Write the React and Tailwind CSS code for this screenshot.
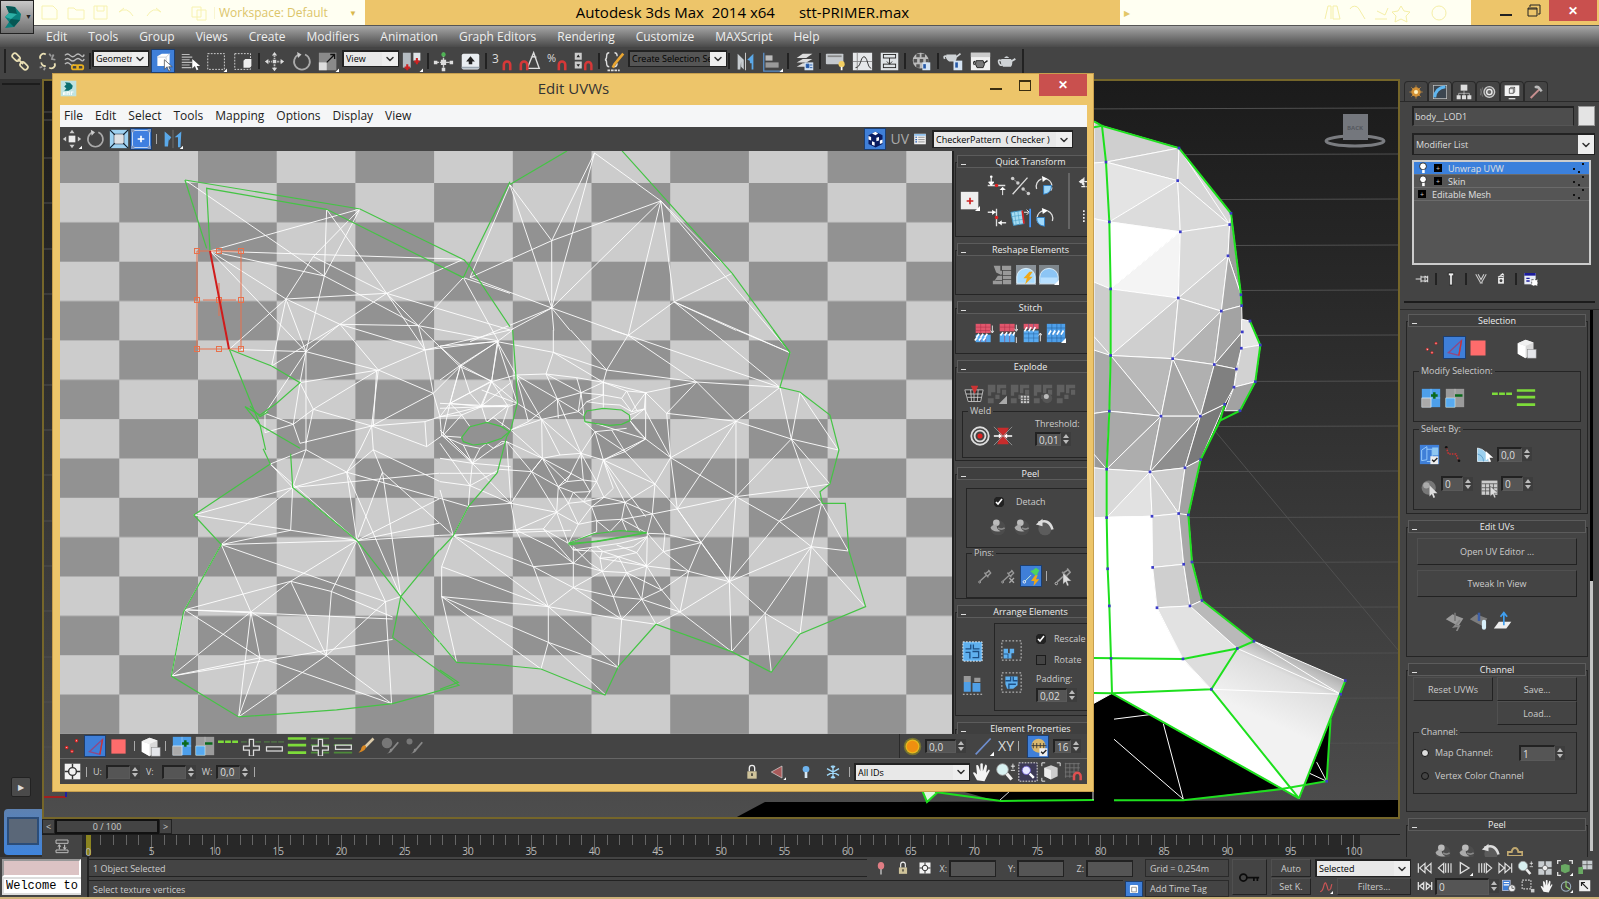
import React from "react";
import { ChevronDown } from "lucide-react";

const ICONS = {
  logo: <><path d="M5 1l9 1 6 7-1 6-6 7-9 1 4-6-4-5 4-4z" fill="#0b7f7c" /><path d="M5 1l9 1 2 7-8-1zM13 22l6-7-9-1-2 3z" fill="#075754" /><path d="M8 8l8 1-6 5-6-2z" fill="#2cb0a6" /></>,
  max: <><rect x="1" y="1" width="22" height="22" fill="#bfe3e2" /><path d="M7 3l7 1 4 4-1 4-5 3-6 0 3-3-3-3 3-3z" fill="#0a6f70" /><path d="M5 21v-3h2v3M10 21v-4h3v4M16 21v-4h3" stroke="#fff" strokeWidth="1.5" fill="none" /></>,
  link: <g fill="none" stroke="#e9dfb4" strokeWidth="2"><rect x="2" y="4" width="10" height="6" rx="3" transform="rotate(45 7 7)" /><rect x="11" y="14" width="10" height="6" rx="3" transform="rotate(45 16 17)" /><path d="M9 9l6 6" /></g>,
  unlink: <g fill="none" strokeWidth="2"><path d="M10 4a4 4 0 0 0-6 5M5 13a4 4 0 0 0 5 4M14 19a4 4 0 0 0 6-5" stroke="#e9dfb4" /><path d="M14 3l2 3M19 4l-2 4M21 10l-5-1M3 19l3-1M8 22l1-3" stroke="#999" /></g>,
  bind: <><path d="M1 5q3-3 6 0t6 0 6 0 4-1M1 10q3-3 6 0t6 0 6 0 4-1M1 15q3-3 6 0t4 0" stroke="#bbb" strokeWidth="1.6" fill="none" /><rect x="9" y="16" width="7" height="5" rx="2" fill="none" stroke="#e8b020" strokeWidth="2" /><rect x="15" y="16" width="7" height="5" rx="2" fill="none" stroke="#e8b020" strokeWidth="2" /></>,
  selobj: <><path d="M5 6l5-3h9v11l-4 3H5z" fill="#fff" /><path d="M15 7v10M5 7h10l4-4" stroke="#c3c9d1" fill="none" /><path d="M13 10v11l3-3 2 5 2-1-2-4h4z" fill="#fff" stroke="#444" strokeWidth=".8" /></>,
  list: <><path d="M2 4h9M2 7h12M2 10h9M2 13h12M2 16h9M2 19h11" stroke="#bbb" strokeWidth="1.4" /><path d="M14 9v11l3-3 2 5 2-1-2-4h4z" fill="#fff" /></>,
  rect: <><rect x="2" y="3" width="19" height="18" fill="none" stroke="#e0e0e0" strokeDasharray="2 1.5" /><path d="M20 24h4v-4z" fill="#fff" /></>,
  rectwin: <><rect x="2" y="3" width="18" height="18" fill="none" stroke="#e0e0e0" strokeDasharray="2 1.5" /><path d="M12 11l2-2h7v8l-2 2h-7z" fill="#eee" /></>,
  move: <><path d="M12 1l3 4h-6zM12 23l3-4h-6zM1 12l4-3v6zM23 12l-4-3v6z" fill="#ddd" /><path d="M12 5v4M12 15v4M5 12h4M15 12h4" stroke="#bbb" strokeWidth="2" strokeDasharray="2 1" /><rect x="10" y="10" width="4" height="4" fill="#ddd" /></>,
  moveBig: <><path d="M12 1l3 4h-6zM12 23l3-4h-6zM1 12l4-3v6zM23 12l-4-3v6z" fill="#ccc" /><rect x="8" y="8" width="8" height="8" fill="#eee" /><path d="M20 24h4v-4z" fill="#fff" /></>,
  rotate: <><path d="M16 4a9 9 0 1 1-7 0" fill="none" stroke="#aaa" strokeWidth="2" /><path d="M7 1l5 3-4 4z" fill="#ccc" /></>,
  scale: <><rect x="1" y="2" width="20" height="20" fill="#8a8a8a" /><rect x="1" y="13" width="9" height="9" fill="#ddd" /><path d="M10 13l9-9M14 4h5v5" stroke="#111" fill="none" strokeWidth="1.5" /><path d="M20 24h4v-4z" fill="#fff" /></>,
  pivot: <><rect x="1" y="2" width="9" height="17" fill="#b5bcc2" /><rect x="13" y="2" width="8" height="9" fill="#dfe4e8" /><path d="M6 15v7M3 19h6M17 8v7M14 12h6" stroke="#c22" strokeWidth="2.4" /><path d="M20 24h4v-4z" fill="#fff" /></>,
  manip: <><path d="M12 2v20M2 13h20" stroke="#ccc" strokeWidth="1.6" strokeDasharray="5 1" /><circle cx="12" cy="4" r="2.5" fill="#4fb455" /><path d="M9 10h6v6H9zM1 11h4v4H1zM19 11h4v4h-4zM10 19h4v4h-4z" fill="#ddd" /></>,
  keyb: <><rect x="2" y="3" width="20" height="18" rx="2" fill="#e9edf1" /><path d="M12 6l5 6h-3v3h-4v-3H7z" fill="#222" /><path d="M2 18h20v2H2z" fill="#9ba6b0" /></>,
  mag: <path d="M14 22v-6a3.500 3.500 0 0 1 7 0v6" fill="none" stroke="#d63838" strokeWidth="2.800" />,
  spinsnap: <><rect x="2" y="2" width="8" height="8" fill="#ccc" /><rect x="2" y="12" width="8" height="8" fill="#ccc" /><path d="M4 7l2-3 2 3zM4 15l2 3 2-3z" fill="#222" /></>,
  anglesnap: <path d="M9 20L16 3l6 17M9 20h14M13 8a8 8 0 0 1 6 0" stroke="#ddd" fill="none" strokeWidth="1.500" />,
  named: <><path d="M6 2q-3 0-3 4t-2 4q2 0 2 4t3 4M12 2q3 0 3 4M11 18q4 0 4-4" stroke="#ddd" fill="none" strokeWidth="1.600" /><path d="M22 3L12 15l-2 4" stroke="#e9a632" strokeWidth="3" /><path d="M4 22h14" stroke="#ddd" strokeWidth="2" strokeDasharray="3 1" /></>,
  mirror: <><path d="M3 3l7 7v11l-3-3V12l-1 9H3z" fill="#c7ccd0" /><path d="M21 3l-7 7 3 1v3h2v7h2z" fill="#5aa8e8" /><path d="M12 2v20" stroke="#ddd" /></>,
  uvmirror: <><path d="M2 3l8 7-3 4v-3l-1 10H2z" fill="#5aa8e8" /><path d="M22 3l-8 7 4 0v12h3z" fill="#5aa8e8" /><path d="M12 1v22" stroke="#777" /><path d="M20 24h4v-4z" fill="#fff" /></>,
  align: <><path d="M2 2v21h20" stroke="#5a8fc8" fill="none" strokeWidth="1.500" /><rect x="4" y="5" width="8" height="6" fill="#bbb" /><rect x="4" y="13" width="15" height="6" fill="#999" /><path d="M20 24h4v-4z" fill="#fff" /></>,
  layers: <><path d="M3 8l7-5h11l-7 5zM3 13l7-4h11l-7 4zM3 18l7-4h9l-6 4z" fill="#ddd" /><rect x="12" y="13" width="10" height="9" fill="#cfe0f2" /><path d="M14 15h3v4h-3zM18 16h3M18 19h3" fill="#2458a8" stroke="#2458a8" /></>,
  ribbon: <><rect x="1" y="3" width="20" height="12" rx="1" fill="#c5c9cd" /><path d="M3 6h16" stroke="#888" strokeWidth="2" /><circle cx="19" cy="15" r="3.500" fill="#f3cf62" /><path d="M19 18v4" stroke="#fff" strokeWidth="2" /></>,
  curve: <><rect x="1" y="2" width="22" height="20" fill="#e6e8ea" /><path d="M6 2v20M1 12h22" stroke="#888" /><path d="M4 19q4 0 6-7t5-5q2 2 3 7t4 6" stroke="#222" fill="none" /></>,
  schem: <><rect x="2" y="2" width="20" height="20" fill="#dfe3e6" /><rect x="5" y="4" width="14" height="4" fill="none" stroke="#222" /><rect x="5" y="15" width="14" height="4" fill="none" stroke="#222" /><path d="M12 8v7M9 12l3 3 3-3" stroke="#222" fill="none" /></>,
  material: <><circle cx="11" cy="11" r="9" fill="#bbb" /><path d="M6 3h4v4H6zM12 3h4v4h-4zM3 9h4v4H3zM10 9h4v4h-4zM17 9h3v4h-3zM6 15h4v4H6z" fill="#555" /><rect x="13" y="13" width="9" height="9" fill="#d4e3f3" /><path d="M14 15h3v5h-3z" fill="#2458a8" /></>,
  teapot: <><path d="M5 9h11q3 4 0 9H7Q3 14 5 9zM8 8q3-4 6 0z" fill="#cfd3d6" /><path d="M16 12l5-3M5 11q-4-2-3 2t4 3" stroke="#cfd3d6" fill="none" strokeWidth="2" /></>,
  teaframe: <><rect x="1" y="2" width="22" height="20" fill="#f0f0f0" /><rect x="1" y="2" width="22" height="5" fill="#ccc" /><path d="M7 11h8q3 4 0 8H8q-3-4-1-8z" fill="#777" stroke="#222" /><path d="M16 14l4-3M6 12q-3 0-1 4" stroke="#222" fill="none" strokeWidth="1.500" /></>,
  teaset: <><path d="M4 4h11q2 4-1 8H7Q2 9 4 4z" fill="#cfd3d6" /><path d="M15 7l5-4M4 6q-4-1-2 3" stroke="#cfd3d6" fill="none" strokeWidth="2" /><rect x="12" y="11" width="10" height="11" fill="#d4e3f3" /><path d="M14 13h3v6h-3z" fill="#2458a8" /></>,
  dots: <g fill="#fff" stroke="#d22" strokeWidth="1.500"><circle cx="18" cy="5" r="1.500" /><circle cx="5" cy="14" r="1.500" /><circle cx="12" cy="19" r="1.500" /></g>,
  edge: <><path d="M20 4L5 18l12 3z" fill="none" stroke="#8e4a86" strokeWidth="1.500" /><path d="M20 4L17 21" stroke="#c33" strokeWidth="1.500" /></>,
  poly: <rect x="3" y="3" width="18" height="18" fill="#ff6c6c" />,
  cube: <><path d="M2 6l9-4 9 3v12l-9 6-9-5z" fill="#d9d9d9" /><path d="M2 6l9 3v14l-9-5z" fill="#fff" /><path d="M2 6l9-4 9 3-9 4z" fill="#f1f1f1" /><rect x="13" y="13" width="10" height="10" fill="#e4e6ea" stroke="#888" strokeWidth=".600" /></>,
  box: <><path d="M4 7l8-3 8 3v10l-8 4-8-4z" fill="#ccc" /><path d="M4 7l8 3v11l-8-4z" fill="#eee" /><path d="M1 5V1h4M19 1h4v4M1 19v4h4" fill="none" stroke="#fff" /></>,
  grow: <><rect x="1" y="1" width="22" height="22" fill="#4d9fea" /><rect x="1" y="12" width="11" height="11" fill="#aaa" stroke="#eee" strokeWidth=".600" /><path d="M12 1v22M1 12h22" stroke="#bfe0ff" strokeWidth=".600" /><path d="M16 5v8M12 9h8" stroke="#0b6a1c" strokeWidth="3" /></>,
  shrink: <><rect x="1" y="1" width="22" height="22" fill="#9b9b9b" /><rect x="1" y="12" width="11" height="11" fill="#58aaf0" stroke="#dff" strokeWidth=".600" /><path d="M12 1v11" stroke="#bbb" /><path d="M12 9h9" stroke="#0b6a1c" strokeWidth="3" /></>,
  loop: <path d="M0 7h7M8.500 7h7M17 7h7" stroke="#7ddc3a" strokeWidth="3" />,
  ring: <path d="M1 3h22M1 11h22M1 20h22" stroke="#7ddc3a" strokeWidth="3.200" />,
  loopplus: <><path d="M0 7h7M8.500 7h7M17 7h7" stroke="#4d6b45" strokeWidth="2" /><path d="M10 4h5v8h7v5h-7v7h-5v-7H3v-5h7z" fill="#444" stroke="#ddd" strokeWidth="1.500" /></>,
  loopminus: <><path d="M0 7h7M8.500 7h7M17 7h7" stroke="#4d6b45" strokeWidth="2" /><rect x="3" y="13" width="19" height="5" fill="#444" stroke="#ddd" strokeWidth="1.500" /></>,
  ringplus: <><path d="M1 3h22M1 11h22M1 20h22" stroke="#4d8a3a" strokeWidth="2" /><path d="M10 4h5v8h7v5h-7v7h-5v-7H3v-5h7z" fill="#444" stroke="#ddd" strokeWidth="1.500" /></>,
  ringminus: <><path d="M1 3h22M1 11h22M1 20h22" stroke="#4d8a3a" strokeWidth="2" /><rect x="3" y="11" width="19" height="5" fill="#444" stroke="#ddd" strokeWidth="1.500" /></>,
  brush: <><path d="M22 2L11 13" stroke="#d9c9a8" strokeWidth="3.500" /><path d="M12 12q1 6-10 9 4-3 4-7 3-5 6-2z" fill="#d98822" /></>,
  graybrush: <><circle cx="8" cy="8" r="7" fill="#777" /><path d="M23 7L12 20" stroke="#888" strokeWidth="2.500" /><path d="M16 15q-1 6-8 7 4-2 4-6z" fill="#888" /></>,
  graybrush2: <><circle cx="6" cy="6" r="4" fill="#777" /><path d="M23 7L12 20" stroke="#888" strokeWidth="2.500" /><path d="M16 15q-1 6-8 7 4-2 4-6z" fill="#888" /></>,
  scaleuv: <><rect x="1" y="1" width="22" height="22" fill="#9fd2f2" /><rect x="6" y="6" width="12" height="12" fill="#dde0e4" stroke="#223" strokeWidth=".600" /><path d="M1 1l6 6M23 1l-6 6M1 23l6-6M23 23l-6-6" stroke="#123" strokeWidth="1.500" /></>,
  freeform: <><rect x="2" y="2" width="20" height="20" fill="#3f7fe0" stroke="#fff" strokeWidth=".800" /><path d="M12 8v8M8 12h8" stroke="#fff" strokeWidth="2" /><path d="M0 0h4v4H0zM20 0h4v4h-4zM0 20h4v4H0zM20 20h4v4h-4z" fill="#7d96c0" /></>,
  checker: <><path d="M12 3l8 4v10l-8 4-8-4V7z" fill="#0a1c60" /><path d="M8 5l4-2 3 2-3 2zM4 8l3 1v4l-3-1zM13 10l3-1v4l-3 1zM8 14l3 1v4l-3-1zM17 13l3-1v4l-3 1z" fill="#fff" /></>,
  options: <><rect x="2" y="3" width="20" height="18" fill="#f2f2f2" /><path d="M4 9h3M4 13h3M4 17h3" stroke="#2a5fb0" strokeWidth="2" /><path d="M9 9h11M9 13h11M9 17h11" stroke="#888" strokeWidth="1.500" /><path d="M2 5h20" stroke="#8fc1ee" strokeWidth="3" /></>,
  plus: <><rect x="1" y="1" width="21" height="21" fill="#eee" /><path d="M12 8v8M8 12h8" stroke="#c22" strokeWidth="2" /><path d="M18 24h6v-6z" fill="#fff" /></>,
  alignh: <><path d="M2 12h20M6 3v9" stroke="#ddd" fill="none" strokeWidth="1.500" /><path d="M6 12l-3-4h6zM19 23v-8M16 17l3-3 3 3" fill="#fff" stroke="#fff" /><circle cx="12" cy="12" r="2" fill="#d22" /><circle cx="6" cy="2" r="1.500" fill="#fff" /></>,
  alignv: <><path d="M12 2v20M2 6h9M14 18h9" stroke="#ddd" fill="none" strokeWidth="1.500" /><path d="M11 6L7 3v6zM14 18l4-3v6z" fill="#fff" /><circle cx="12" cy="12" r="2" fill="#d22" /></>,
  linear: <><path d="M3 22L20 3" stroke="#ddd" strokeWidth="1.500" /><path d="M3 4l6 5M15 16l6 5" stroke="#999" /><circle cx="3" cy="4" r="2" fill="#ccc" /><circle cx="9" cy="9" r="2" fill="#ccc" /><circle cx="15" cy="16" r="2" fill="#ccc" /><circle cx="21" cy="21" r="2" fill="#ccc" /></>,
  rotcw: <><path d="M3 16a9 9 0 1 1 16 2" fill="none" stroke="#ddd" strokeWidth="1.500" strokeDasharray="14 2" /><path d="M9 1l6 3-5 4z" fill="#fff" /><path d="M11 12h9q0 9-9 10z" fill="#9fd8fa" stroke="#2a7fc8" /></>,
  rotccw: <><path d="M21 16A9 9 0 1 0 5 18" fill="none" stroke="#ddd" strokeWidth="1.500" strokeDasharray="14 2" /><path d="M9 1l7 3-6 4z" fill="#fff" /><path d="M12 12H3q0 9 9 10z" fill="#9fd8fa" stroke="#2a7fc8" /></>,
  alignedge: <><path d="M1 6l13-2 2 15-12 2z" fill="#a6dcf2" stroke="#3a8fc0" /><path d="M5 5l2 15M9 5l2 15M2 11l13-2M3 16l12-2" stroke="#4a9fc8" strokeWidth=".700" /><path d="M14 4l2 15" stroke="#d22" strokeWidth="2" /><path d="M16 6h5M19 3l3 3-3 3" stroke="#fff" fill="none" /><path d="M23 2v21" stroke="#49f" strokeWidth="2" /></>,
  straighten: <path d="M2 1h8v6h1v5l-6-3zM12 1h11v5H12zM8 7h4v5M13 7h10v5H13zM3 19l4-6h5v5H5zM13 13h10v4H13zM1 19h11v4H1zM13 18h10v5H13z" fill="#999" />,
  relaxbolt: <><rect width="24" height="24" fill="#8a9299" /><path d="M1 22V14q1-9 11-10 10 1 11 10v8z" fill="#a9dcff" stroke="#e8f6ff" /><path d="M16 8l-7 8h4l-2 7 9-9h-4l4-6z" fill="#f0a818" /></>,
  relax: <><rect width="24" height="24" fill="#7e868c" /><path d="M1 22V14q1-9 11-10 10 1 11 10v8z" fill="#8cc5f5" stroke="#e8f6ff" /><path d="M2 15h20v7H2z" fill="#b8e0ff" /><path d="M18 24h6v-6z" fill="#fff" /></>,
  stitchA: <><rect x="2" y="1" width="18" height="11" fill="#e0566c" /><rect x="2" y="14" width="18" height="9" fill="#58aaf0" /><path d="M2 5h18M2 9h18M8 1v22M14 1v22" stroke="#aa2f48" strokeWidth=".600" /><path d="M3 17l3-4M8 17l3-4M13 17l3-4M1 21l3-4M6 21l3-4M11 21l3-4" stroke="#fff" strokeWidth="2" /><path d="M22 3v8M20 9l2 3 2-3" stroke="#fff" fill="none" /></>,
  stitchB: <><rect x="2" y="1" width="18" height="9" fill="#e0566c" /><rect x="2" y="13" width="18" height="10" fill="#58aaf0" /><path d="M2 5h18M8 1v22M14 1v22" stroke="#aa2f48" strokeWidth=".600" /><path d="M3 15l3-4M8 15l3-4M13 15l3-4M18 15l2-4" stroke="#fff" strokeWidth="2" /><path d="M22 2v7M22 24v-7M20 7l2 3 2-3" stroke="#fff" fill="none" /></>,
  stitchC: <><rect x="2" y="1" width="18" height="6" fill="#e0566c" /><rect x="2" y="9" width="18" height="14" fill="#58aaf0" /><path d="M2 13h18M2 18h18M8 1v22M14 1v22" stroke="#27609c" strokeWidth=".600" /><path d="M3 10l3-5M8 10l3-5M13 10l3-5" stroke="#fff" strokeWidth="2" /><path d="M22 22v-9M20 15l2-3 2 3" stroke="#fff" fill="none" /></>,
  stitchD: <><rect x="1" y="1" width="22" height="22" fill="#4d9fea" /><path d="M1 6h22M1 18h22M7 1v22M13 1v22M18 1v22" stroke="#27609c" strokeWidth=".700" /><path d="M3 14l3-5M8 14l3-5M13 14l3-5M18 14l3-5" stroke="#fff" strokeWidth="2" /><path d="M18 24h6v-6z" fill="#fff" /></>,
  basket: <><path d="M1 7h22l-3 14H5z" fill="#333" stroke="#ccc" /><path d="M2 12h20M4 16h17M8 7l1 14M12 7v14M17 7l-1 14" stroke="#ccc" /><path d="M8 2h9l-4 10z" fill="#c33" /></>,
  flatten: <><path d="M1 1h9v9H5v4H1zM12 1h11v4h-7v6h-4zM1 17h7v6H1zM10 13h5v5h-5zM18 7h5v6h-5z" fill="#606060" /></>,
  tri: <path d="M14 24h10V14z" fill="#aaa" />,
  minigrid: <><rect x="13" y="14" width="10" height="9" fill="#ccc" /><path d="M13 17h10M13 20h10M16 14v9M20 14v9" stroke="#444" /></>,
  miniball: <><circle cx="17" cy="17" r="6" fill="#555" /><circle cx="16" cy="15" r="3" fill="#bbb" /></>,
  target: <g fill="none" stroke="#ddd" strokeWidth="2.200"><circle cx="12" cy="12" r="10.500" /><circle cx="12" cy="12" r="6.500" /><circle cx="12" cy="12" r="2" fill="#d22" stroke="#d22" /></g>,
  weld: <><path d="M5 2h14l-3 7v6l3 7H5l3-7V9z" fill="#c82c2c" /><path d="M1 1l22 22M23 1L1 23" stroke="#999" /><path d="M1 12h8M23 12h-8" stroke="#fff" strokeWidth="2" /><path d="M7 9l4 3-4 3zM17 9l-4 3 4 3z" fill="#fff" /></>,
  ball: <><circle cx="12" cy="13" r="9" fill="#4c4c4c" /><circle cx="10" cy="7" r="4" fill="#bbb" /><path d="M3 13q3 6 12 4-6-3-4-8-6 0-8 4z" fill="#aaa" /><path d="M12 13q4 3 8 0" stroke="#888" fill="none" strokeWidth="2" /></>,
  reset: <><circle cx="12" cy="14" r="8" fill="#5c5c5c" /><path d="M4 7q13-6 17 8" stroke="#ddd" strokeWidth="3" fill="none" /><path d="M1 9l8-7v9z" fill="#ddd" /></>,
  pin: <><circle cx="4" cy="21" r="1.500" fill="none" stroke="#ccc" /><path d="M5 19L14 11M11 7l6 7M13 8l6-4M16 12l5-5M17 3l4 5" stroke="#999" strokeWidth="2" /></>,
  cross: <path d="M14 15l7 7M21 15l-7 7" stroke="#aaa" strokeWidth="2" />,
  pinbolt: <><circle cx="4" cy="19" r="1.500" fill="none" stroke="#fff" /><path d="M5 18l7-7" stroke="#dfd" /><path d="M11 6l8 7 1-4 2-4-4-3-4 3z" fill="#4cd35f" /><path d="M17 11l-5 7h4l-1 6 7-8h-4l2-5z" fill="#f0a818" /></>,
  cursor: <path d="M12 8v14l3-3 2 5 2-1-2-5h5z" fill="#ddd" stroke="#555" strokeWidth=".500" />,
  quickrest: <path d="M2 8h16M2 8l5-4v8zM4 14h12" stroke="#eee" fill="#eee" strokeWidth="1.500" strokeDasharray="5 1" />,
  quickrest2: <path d="M12 2v20M7 4v16" stroke="#eee" strokeWidth="2" strokeDasharray="2 2" />,
  packA: <><rect x="1" y="1" width="22" height="22" fill="#5fb0ee" stroke="#fff" strokeDasharray="2 1.500" /><path d="M4 9h6V4M13 4v5h7M4 13h5v7M12 12h7v7h-7" stroke="#1d4f84" fill="none" strokeWidth="1.500" /></>,
  packB: <><rect x="1" y="1" width="22" height="22" fill="none" stroke="#ddd" strokeDasharray="2 2" /><path d="M3 10h5v5h2v-5h5v5h-3v6H3z" fill="#5fb0ee" /><path d="M3 16h5v5M12 17h3" stroke="#1d4f84" fill="none" /></>,
  packC: <><rect x="1" y="1" width="22" height="22" fill="none" stroke="#ddd" strokeDasharray="2 2" /><path d="M5 5h14v10l-5 4H7l-2-5z" fill="#5fb0ee" /><path d="M5 10h6V5M14 5v5h5M9 19v-5h8" stroke="#1d4f84" fill="none" strokeWidth="1.500" /></>,
  packD: <><path d="M2 1h8v7H2zM14 3h7v5h-7z" fill="#999" /><path d="M2 8h8v11H2zM12 9h9v10h-9z" fill="#4f9fe6" /><path d="M1 22h22" stroke="#ddd" strokeDasharray="2 2" /></>,
  sun: <><circle cx="12" cy="12" r="10" fill="#a8a31c" opacity=".500" /><circle cx="12" cy="12" r="8" fill="#e8b81c" /><circle cx="12" cy="12" r="6.500" fill="#ef8f10" /></>,
  diag: <><path d="M2 22L20 3" stroke="#6f8fd0" strokeWidth="2" /><path d="M19 24h5v-5z" fill="#fff" /></>,
  falloff: <><circle cx="12" cy="11" r="8" fill="#d9b76c" /><path d="M4 11h17M6 8v6M10 8v6M14 8v6M18 8v6" stroke="#333" /><rect x="13" y="14" width="9" height="9" fill="#eee" /><path d="M15 18l2 2 4-4" stroke="#222" fill="none" strokeWidth="1.500" /></>,
  hand: <path d="M6 22l-5-9q2-2 4 1l1 1L5 4q2-1 3 1l2 6 0-9q2-1 3 0l0 9 3-8q2 0 2 2l-1 8 3-4q2 0 1 2l-4 8-2 4z" fill="#f4f4f4" />,
  zoom: <><circle cx="9" cy="9" r="7" fill="#d8f1f1" stroke="#999" /><path d="M14 14l6 7" stroke="#eee" strokeWidth="4" /><path d="M19 5h5M21.500 2v6M19 10h5" stroke="#fff" /></>,
  zoomreg: <><rect x="1" y="1" width="22" height="22" fill="#3d3a55" stroke="#fff" strokeDasharray="2 1.500" /><circle cx="10" cy="10" r="5" fill="#e6e6ff" stroke="#6a5ad0" /><path d="M14 14l5 5" stroke="#fff" strokeWidth="3" /></>,
  gridsnap: <><path d="M1 2h18M1 7h18M1 12h14M1 17h10M2 1v18M7 1v18M12 1v14M17 1v10" stroke="#777" /><path d="M12 22v-5a4 4 0 0 1 8 0v5" fill="none" stroke="#e05050" strokeWidth="3" /></>,
  lock: <><rect x="5" y="11" width="14" height="11" fill="#cfc39a" /><path d="M8 11V6a4 4 0 0 1 8 0v5" stroke="#eee" strokeWidth="2" fill="none" /><path d="M12 14v4" stroke="#222" strokeWidth="2" /></>,
  arrowred: <><path d="M2 12L18 3v18z" fill="#a85a5a" stroke="#ddd" /><path d="M20 24h4v-4z" fill="#fff" /></>,
  bulb: <><circle cx="12" cy="8" r="5" fill="#6fb4ee" /><path d="M12 12v9" stroke="#d8e8f4" strokeWidth="4" /></>,
  snow: <path d="M12 2v20M3 7l18 10M21 7L3 17M9 3l3 3 3-3M9 21l3-3 3 3" stroke="#9fd8fa" strokeWidth="2" fill="none" />,
  absolute: <><rect x="1" y="1" width="22" height="22" fill="#f2f2f2" /><circle cx="12" cy="12" r="5.500" fill="none" stroke="#333" strokeWidth="2" /><path d="M12 1v5M12 18v5M1 12h5M18 12h5" stroke="#333" strokeWidth="2" /></>,
  create: <><circle cx="12" cy="12" r="7" fill="#f0a030" opacity=".800" /><path d="M12 2v20M2 12h20M5 5l14 14M19 5L5 19" stroke="#e9a040" /><circle cx="12" cy="12" r="3" fill="#fff3c0" /></>,
  modify: <><rect x="2" y="2" width="20" height="20" fill="#3c4650" stroke="#ccc" /><path d="M4 20Q5 6 20 4" stroke="#5fb6f0" strokeWidth="4.500" fill="none" /></>,
  hier: <><rect x="7" y="1" width="10" height="9" fill="#ddd" /><path d="M12 10v5M4 18v-4h16v4M12 14v4" stroke="#ccc" fill="none" /><path d="M1 17h6v6H1zM9 17h6v6H9zM17 17h6v6h-6z" fill="#ddd" /></>,
  motion: <><circle cx="14" cy="12" r="8" fill="#666" stroke="#ccc" strokeWidth="2" /><circle cx="14" cy="12" r="4" fill="none" stroke="#eee" strokeWidth="2" /><path d="M4 5q-4 7 0 14M1 7q-2 5 0 10" stroke="#888" fill="none" /></>,
  display: <><rect x="1" y="2" width="22" height="16" fill="#f4f4f4" /><path d="M7 22h10" stroke="#ddd" strokeWidth="2" /><path d="M8 7l2-2h6v7l-2 2H8zM14 7v7M8 7h6l2-2" stroke="#333" fill="none" /></>,
  hammer: <><path d="M4 21L17 8" stroke="#c78f8f" strokeWidth="3" /><path d="M10 3q6-2 9 3l3 4-3 2-4-5-5-1z" fill="#bbb" /></>,
  pinstack: <path d="M1 12h8M9 7v10M9 9h6v6H9M15 7v10M19 7v10M15 8l4 2v4l-4 2" stroke="#ddd" strokeWidth="1.600" fill="none" />,
  showend: <path d="M8 3h8v4h-2v14h-4V7H8z" fill="#eee" stroke="#111" />,
  unique: <path d="M3 4l8 14M21 4l-8 14M7 4l5 9 5-9M10 19h5" stroke="#ccc" strokeWidth="1.800" fill="none" />,
  trash: <><path d="M7 10h10v10H7z" fill="#eee" /><path d="M7 9q5-4 10 0M11 6l4-3 2 3" stroke="#eee" fill="none" strokeWidth="2" /><circle cx="12" cy="15" r="2.500" fill="#444" /></>,
  config: <><rect x="2" y="3" width="17" height="17" fill="#e9ecf6" /><path d="M2 3h17v4H2z" fill="#1c1c9c" /><path d="M5 11h5M5 15h5" stroke="#1c1c9c" strokeWidth="2" /><path d="M13 13h9v9h-9z" fill="#fff" stroke="#333" strokeDasharray="3 2" /></>,
  seledge: <><rect x="1" y="1" width="22" height="22" fill="#3f7fd8" /><path d="M3 7l6-4v15l-6 1zM9 6h6v14H9" stroke="#9cd0ff" fill="none" /><rect x="15" y="4" width="7" height="9" fill="#8fc7f2" /><rect x="13" y="14" width="9" height="9" fill="#eee" /><path d="M15 18l2 2 4-4" stroke="#222" fill="none" strokeWidth="1.500" /></>,
  p2p: <><path d="M3 3l3 9h10l4 10" stroke="#c33" fill="none" strokeDasharray="2 1.500" strokeWidth="2" /><circle cx="3" cy="3" r="1.800" fill="#111" /><circle cx="20" cy="21" r="1.800" fill="#111" /></>,
  planar: <><path d="M2 22V4q14 2 15 18z" fill="#9cd0ee" stroke="#e8f6ff" /><path d="M2 12q8 2 8 10" stroke="#4f94c4" fill="none" /><path d="M13 8v13l3-3 2 5 2-1-2-5h5z" fill="#fff" /></>,
  smooth: <><circle cx="11" cy="11" r="9" fill="#777" /><circle cx="8" cy="8" r="4" fill="#aaa" /><path d="M12 8v14l3-3 2 5 2-1-2-5h5z" fill="#ddd" /></>,
  matid: <><rect x="2" y="2" width="20" height="18" fill="#ccc" /><path d="M2 6h20M2 11h20M2 15h20M7 6v14M12 6v14M17 6v14" stroke="#555" /><path d="M13 9v13l3-3 2 5 2-1-2-5h5z" fill="#ddd" stroke="#333" strokeWidth=".500" /></>,
  quick: <><path d="M1 10l8-6 13 5-6 9z" fill="#9a9a9a" /><path d="M12 2v10" stroke="#777" strokeWidth="2" /><path d="M18 11l-7 8 6-1-3 6" stroke="#888" fill="none" strokeWidth="2" /></>,
  quickb: <><path d="M1 10l8-6 13 5-6 9z" fill="#7d7d7d" /><path d="M12 2v10" stroke="#3c5fa8" strokeWidth="3" /><path d="M18 13v7" stroke="#d8f0fa" strokeWidth="5" strokeLinecap="round" /></>,
  quickc: <><path d="M1 21l6-8h15l-6 8z" fill="#eee" /><path d="M13 17V4M9 7l4-5 4 5" stroke="#3f9ff0" strokeWidth="2" fill="none" /></>,
  wrench: <path d="M1 24v-6h6q1-6 5-6t5 6h6v6z" fill="none" stroke="#c0a870" strokeWidth="3" />,
  trackmini: <><path d="M3 3h18v5H3zM3 18h18v4H3z" fill="none" stroke="#bbb" strokeWidth="1.500" /><path d="M8 17v-6M6 13l2-3 2 3M16 10v6M14 14l2 3 2-3" stroke="#ccc" fill="none" strokeWidth="1.500" /></>,
  pinred: <><ellipse cx="12" cy="8" rx="5.500" ry="6.500" fill="#e07d84" /><path d="M12 14v9" stroke="#ddd" strokeWidth="2" /></>,
  key: <><circle cx="5" cy="12" r="4" fill="none" stroke="#0c0c0c" strokeWidth="2" /><path d="M9 12h14M17 12v4M21 12v4" stroke="#0c0c0c" strokeWidth="2" /></>,
  isolate: <><rect x="5" y="5" width="14" height="14" rx="2" fill="#fff" /><path d="M8 9h8v8H8z" fill="none" stroke="#555" /></>,
  wave: <><path d="M2 20q4 0 6-9t4-5 3 9 5 0l2-8" stroke="#c55" fill="none" strokeWidth="2" /><path d="M19 24h5v-5z" fill="#fff" /></>,
  first: <path d="M2 5v14M12 5L4 12l8 7zM21 5l-8 7 8 7z" fill="none" stroke="#ddd" strokeWidth="1.800" />,
  prev: <path d="M10 5L2 12l8 7zM13 5v14M17 5v14M21 5v14" fill="none" stroke="#ddd" strokeWidth="1.800" />,
  play: <><path d="M5 4l13 8-13 8z" fill="none" stroke="#ddd" strokeWidth="2" /><path d="M19 24h5v-5z" fill="#fff" /></>,
  next: <path d="M14 5l8 7-8 7zM3 5v14M7 5v14M11 5v14" fill="none" stroke="#ddd" strokeWidth="1.800" />,
  last: <path d="M22 5v14M12 5l8 7-8 7zM3 5l8 7-8 7z" fill="none" stroke="#ddd" strokeWidth="1.800" />,
  keymode: <path d="M2 6v12M22 6v12M10 7l-6 5 6 5zM14 7l6 5-6 5z" fill="none" stroke="#ddd" strokeWidth="2" />,
  timecfg: <><rect x="1" y="2" width="13" height="18" fill="#3f7fd8" stroke="#dde" /><path d="M3 6h9M3 10h9" stroke="#fff" strokeWidth="2" /><circle cx="17" cy="16" r="6" fill="#eee" stroke="#333" /><path d="M17 12v4h4" stroke="#222" fill="none" /></>,
  four: <><path d="M2 2h9v9H2zM13 2h9v9h-9zM2 13h9v9H2zM13 13h9v9h-9z" fill="#c8cdd0" /><circle cx="12" cy="12" r="4" fill="#eee" stroke="#555" /></>,
  extents: <><path d="M1 6V1h5M18 1h5v5M1 18v5h5" stroke="#ddd" fill="none" strokeWidth="2" /><path d="M6 8l6-2 7 2v9l-7 3-6-3z" fill="#69a963" /><path d="M19 24h5v-5z" fill="#fff" /></>,
  extall: <><path d="M8 1h15v13H8z" fill="#c8cdd0" /><path d="M2 11l7-1v11H2z" fill="#69a963" /><path d="M15 1v13M8 7h15" stroke="#444" /></>,
  orbit: <><circle cx="12" cy="13" r="8" fill="none" stroke="#9ab" strokeWidth="2" /><path d="M12 3v10l7 5" stroke="#8fd06a" strokeWidth="2" fill="none" /><path d="M19 24h5v-5z" fill="#fff" /></>,
  maxvp: <><rect x="2" y="2" width="19" height="19" fill="#eee" /><path d="M6 6l11 11M6 12V6h6" stroke="#222" strokeWidth="2" fill="none" /></>,
  dashed: <><rect x="2" y="2" width="15" height="15" fill="none" stroke="#ccc" strokeDasharray="3 2" strokeWidth="2" /><path d="M17 17h6v6h-6z" fill="#ccc" /></>,
};

const Icon = ({ names, className = "h-[21px] w-[21px]" }) => (
  <svg viewBox="0 0 24 24" className={`shrink-0 ${className}`} aria-hidden="true">
    {names.split(" ").map((n) => <g key={n}>{ICONS[n]}</g>)}
  </svg>
);

const Tool = ({ names, label, active, cell = "w-[27px] h-6", icon }) => (
  <button
    aria-label={label || names}
    className={`flex shrink-0 items-center justify-center ${cell} ${active ? "border border-[#1d3f70] bg-[#3f7fd8]" : ""}`}
  >
    {typeof icon === "string" ? <Icon names={names} className={icon} /> : <Icon names={names} />}
  </button>
);

const Sep = ({ className = "h-4" }) => (
  <span className={`mx-[1px] w-[2px] shrink-0 bg-[#222] ${className}`} />
);

const Bar = () => <span className="mx-[4px] h-2.5 w-px shrink-0 self-center bg-[#aaa]" />;

const Pick = ({ label, value, className = "", tone = "bg-[#e8e8e8] text-black" }) => (
  <div className={`relative flex shrink-0 overflow-hidden border-2 border-r border-b border-[#222] ${tone} ${className}`}>
    <select aria-label={label} className="w-full appearance-none bg-transparent px-[2px] text-[9px] leading-none outline-none">
      <option>{value}</option>
    </select>
    <span className="pointer-events-none absolute inset-y-0 right-0 flex w-4 items-center justify-center bg-[#eee]">
      <ChevronDown className="h-3 w-3 text-[#333]" strokeWidth={3} />
    </span>
  </div>
);

const Num = ({ label, value = "", width = "w-6", height = "h-3.5" }) => (
  <span className="flex shrink-0 items-center">
    <input
      aria-label={label}
      defaultValue={value}
      className={`${width} ${height} border-2 border-r border-b border-[#222] border-r-[#5a5a5a] border-b-[#5a5a5a] bg-[#555] px-[2px] text-[10px] leading-none text-[#ddd] outline-none`}
    />
    <svg viewBox="0 0 10 14" className="h-3.5 w-2.5 bg-[#3d3d3d]" aria-hidden="true">
      <path d="M2 6l3-4 3 4zM2 8l3 4 3-4z" fill="#bbb" />
    </svg>
  </span>
);

const Rollout = ({ title, height, children }) => (
  <section className={`mb-1.5 flex shrink-0 flex-col overflow-hidden ${height}`}>
    <h3 className="relative z-10 mx-[2px] flex h-[13px] shrink-0 items-center border border-[#5c5c5c] bg-[#3f3f3f] text-[9px] leading-none text-[#eee]">
      <span className="absolute bottom-[2px] left-[3px] h-px w-[5px] bg-[#ddd]" />
      <span className="w-full text-center">{title}</span>
    </h3>
    <div className="-mt-1.5 flex min-h-0 flex-1 flex-col border border-[#252525] pt-1.5">{children}</div>
  </section>
);

const Group = ({ title, className = "", children }) => (
  <fieldset className={`min-w-0 border border-[#252525] px-[3px] ${className}`}>
    {title && <legend className="ml-[2px] px-[2px] text-[9px] leading-[10px] text-[#ccc]">{title}</legend>}
    {children}
  </fieldset>
);

const Push = ({ children, className = "" }) => (
  <button className={`flex items-center justify-center border border-t-[#505050] border-r-[#222] border-b-[#222] border-l-[#505050] text-[9px] leading-none text-[#ccc] ${className}`}>
    {children}
  </button>
);

const MENUS = ["Edit", "Tools", "Group", "Views", "Create", "Modifiers", "Animation", "Graph Editors", "Rendering", "Customize", "MAXScript", "Help"];
const UV_MENUS = ["File", "Edit", "Select", "Tools", "Mapping", "Options", "Display", "View"];

const TitleBar = () => (
  <header className="flex h-[25px] shrink-0 bg-[#edc56a]">
    <div className="relative w-[34px] shrink-0">
      <button aria-label="Application menu" className="absolute top-0 left-0 z-20 flex h-[34px] w-[34px] items-center border border-[#222] bg-gradient-to-b from-[#c8c8c8] to-[#6e6e6e]">
        <Icon names="logo" className="h-6 w-6" />
        <span className="text-[7px] text-[#222]">▼</span>
      </button>
    </div>
    <div className="flex w-[331px] shrink-0 items-center bg-[#fffff2] text-[#f4eebb]">
      <svg viewBox="0 0 180 24" className="h-6 w-[180px]" fill="none" stroke="#f7f2b0" aria-hidden="true">
        <path d="M8 5h11l4 4v9H8zM34 7h6l2 2h8v9H34zM60 5h13v13H60zM63 5v5h7V5M85 11q8-6 14 4M85 11l5-4M127 11q-8-6-14 4M127 11l-5-4M158 6h9v10h-9zM163 9h9v10h-9z" />
      </svg>
      <button className="flex-1 border-l border-[#f9f5d0] pl-1 text-left text-[12px] leading-none text-[#dcc56a]">Workspace: Default</button>
      <span className="w-4 text-[8px] text-[#d9b84c]">▼</span>
    </div>
    <h1 className="flex flex-1 items-center justify-center gap-6 text-[15px] leading-none whitespace-pre text-black">
      <span>Autodesk 3ds Max  2014 x64</span>
      <span>stt-PRIMER.max</span>
    </h1>
    <div className="flex w-[351px] shrink-0 items-center justify-between bg-[#fffff2] px-1">
      <span className="text-[8px] text-[#e3c768]">▶</span>
      <svg viewBox="0 0 150 24" className="h-6 w-[150px]" fill="none" stroke="#f5efa8" aria-hidden="true">
        <path d="M8 18l3-13h3v13M16 18V5h4l3 13zM33 8a5 5 0 0 1 9 0l6 10M58 18h12M60 10l8 4 3-7M84 5l3 5 6 1-4 4 1 6-6-3-6 3 1-6-4-4 6-1z" />
        <circle cx="122" cy="12" r="7" />
      </svg>
    </div>
    <div className="flex w-[128px] shrink-0 items-start justify-end">
      <button aria-label="Minimize" className="flex h-[21px] w-[26px] items-center justify-center"><span className="mt-[8px] h-[2px] w-3 bg-[#222]" /></button>
      <button aria-label="Restore" className="flex h-[21px] w-[30px] items-center justify-center">
        <svg viewBox="0 0 14 14" className="h-3.5 w-3.5" fill="none" stroke="#222" aria-hidden="true"><path d="M1 4h9v8H1zM1 5h9M3 3V1h10v9h-2" /></svg>
      </button>
      <button aria-label="Close" className="mr-[2px] flex h-[21px] w-[48px] items-center justify-center bg-[#c9504e] text-[12px] leading-none font-bold text-white">✕</button>
    </div>
  </header>
);

const MainToolbar = () => (
  <div className="flex h-8 shrink-0 items-center bg-[#444] pb-1 pl-[3px]">
    <Sep className="h-6" />
    <Tool names="link" /><Tool names="unlink" /><Tool names="bind" />
    <Sep />
    <Pick label="Selection filter" value="Geometr" className="mb-1.5 h-[17px] w-[57px]" />
    <Tool names="selobj" active cell="w-6 h-6 mx-[2px]" /><Tool names="list" cell="w-[26px] h-6" /><Tool names="rect" /><Tool names="rectwin" />
    <Sep />
    <Tool names="move" /><Tool names="rotate" /><Tool names="scale" />
    <Pick label="Reference coordinate system" value="View" className="mb-1.5 h-[17px] w-[57px]" />
    <Tool names="pivot" />
    <Sep />
    <Tool names="manip" /><Tool names="keyb" />
    <Sep />
    <button aria-label="Snaps" className="flex h-6 w-[28px] shrink-0 items-center justify-center">
      <svg viewBox="0 0 24 24" className="h-[22px] w-[22px] overflow-visible" aria-hidden="true"><text x="1" y="14" fontSize="13" fill="#ddd">3</text>{ICONS.mag}</svg>
    </button>
    <button aria-label="Angle snap" className="flex h-6 w-[27px] shrink-0 items-center justify-center">
      <svg viewBox="0 0 24 24" className="h-[22px] w-[22px]" aria-hidden="true">{ICONS.anglesnap}<g transform="translate(-12 0)">{ICONS.mag}</g></svg>
    </button>
    <button aria-label="Percent snap" className="flex h-6 w-[27px] shrink-0 items-center justify-center">
      <svg viewBox="0 0 24 24" className="h-[22px] w-[22px] overflow-visible" aria-hidden="true"><text x="1" y="13" fontSize="12" fill="#ddd">%</text>{ICONS.mag}</svg>
    </button>
    <Tool names="spinsnap mag" />
    <Sep />
    <Tool names="named" />
    <Pick label="Named selection sets" value="Create Selection Se" tone="bg-[#555] text-black" className="mb-1.5 h-[17px] w-[99px]" />
    <Sep />
    <Tool names="mirror" cell="w-[28px] h-6" /><Tool names="align" />
    <Sep />
    <Tool names="layers" cell="w-[28px] h-6" />
    <Sep />
    <Tool names="ribbon" /><Tool names="curve" /><Tool names="schem" />
    <Sep />
    <Tool names="material" cell="w-[29px] h-6" />
    <Sep />
    <Tool names="teaset" /><Tool names="teaframe" /><Tool names="teapot" />
    <Sep className="h-6" />
  </div>
);

/* shaded faces of the head: fill, then points */
const FACES = [
  ["#cfcfcf", "42,25 66,35 297,84 78,115 42,117"],
  ["#d2d2d2", "78,115 297,84 293,156"],
  ["#e4e4e4", "42,117 78,115 293,156 88,247 42,240"],
  ["#dcdcdc", "88,247 293,156 301,269"],
  ["#d6d6d6", "297,84 453,228 449,253 293,156"],
  ["#d9d9d9", "293,156 449,253 301,269"],
  ["#ececec", "42,240 88,247 92,395 42,380"],
  ["#ffffff", "88,247 301,269 92,395"],
  ["#f4f4f4", "92,395 301,269 295,415"],
  ["#dadada", "301,269 449,253 444,322 295,415"],
  ["#d2d2d2", "295,415 444,322 424,444"],
  ["#9c9c9c", "449,253 453,228 483,408 444,322"],
  ["#a8a8a8", "444,322 483,408 485,432 424,444"],
  ["#cccccc", "42,380 92,395 92,542 42,532"],
  ["#dedede", "92,395 295,415 92,542"],
  ["#cfcfcf", "92,542 295,415 278,549"],
  ["#c9c9c9", "295,415 424,444 278,549"],
  ["#b4b4b4", "278,549 424,444 403,562"],
  ["#a3a3a3", "424,444 485,432 487,490 403,562"],
  ["#8d8d8d", "403,562 487,490 484,526 469,572"],
  ["#aaaaaa", "42,530 92,542 88,665 42,670"],
  ["#b9b9b9", "92,542 278,549 243,676"],
  ["#adadad", "92,542 243,676 88,665"],
  ["#b0b0b0", "278,549 403,562 361,676"],
  ["#a6a6a6", "278,549 361,676 243,676"],
  ["#808080", "403,562 469,572 462,612 434,650 361,676"],
  ["#9a9a9a", "42,670 88,665 80,793 42,790"],
  ["#a9a9a9", "88,665 243,676 80,793"],
  ["#adadad", "80,793 243,676 210,799"],
  ["#a0a0a0", "243,676 361,676 210,799"],
  ["#8e8e8e", "361,676 315,790 210,799"],
  ["#7a7a7a", "361,676 434,650 362,772 315,790"],
  ["#d6d6d6", "42,790 80,793 80,900 42,900"],
  ["#d9d9d9", "80,793 210,799 80,900"],
  ["#e2e2e2", "80,900 210,799 216,897"],
  ["#cdcdcd", "210,799 315,790 296,891"],
  ["#d4d4d4", "210,799 296,891 216,897"],
  ["#a2a2a2", "315,790 362,772 325,894 311,1003 296,891"],
  ["#ffffff", "42,900 216,897 218,1010 231,1099 309,1212 394,1279 657,1520 96,1288 42,1310"],
  ["#d9d9d9", "216,897 296,891 311,1003 218,1010"],
  ["#cfcfcf", "218,1010 311,1003 330,1095 231,1099"],
  ["#a8a8a8", "296,891 325,894 336,998 366,1083 330,1095 311,1003"],
  ["#e2e2e2", "231,1099 330,1095 472,1189 309,1212"],
  ["#b9b9b9", "330,1095 366,1083 522,1173 472,1189"],
  ["#dddddd", "309,1212 472,1189 394,1279"],
  ["url(#shoulder)", "472,1189 522,1173 796,1260 657,1520 394,1279"],
  ["#e6e6e6", "485,462 510,466 541,519 484,526"],
  ["#d2d2d2", "484,526 541,519 526,600 462,612"],
  ["#a2a2a2", "462,612 526,600 480,664 434,664"],
];

const HEAD_GREEN = [
  "42,38 66,35 78,115 88,247 92,395 92,542 88,665 80,793 80,900 83,1013 88,1095 93,1211 96,1288",
  "42,25 66,35 297,84 453,228 483,408 485,432",
  "510,466 541,519 526,600 480,664 420,686 434,650",
  "420,686 362,772 325,894 336,998 366,1083 522,1173 472,1189 309,1212 42,1210",
  "42,1287 96,1288 394,1279 472,1189",
  "96,1288 657,1520 394,1279",
  "796,1260 657,1520",
  "752,1345 740,1482 600,1500 310,1524 102,1524",
];

const HEAD_DOTS = [
  [78, 115], [88, 247], [92, 395], [92, 542], [88, 665], [80, 793], [80, 900], [83, 1013], [88, 1095], [93, 1211],
  [297, 84], [293, 156], [301, 269], [295, 415], [278, 549], [243, 676], [210, 799], [216, 897], [218, 1010], [231, 1099],
  [309, 1212], [394, 1279], [453, 228], [449, 253], [444, 322], [424, 444], [403, 562], [361, 676], [315, 790], [296, 891],
  [311, 1003], [330, 1095], [472, 1189], [483, 408], [485, 432], [487, 490], [484, 526], [469, 572], [462, 612], [434, 650],
  [510, 466], [541, 519], [526, 600], [480, 664], [362, 772], [325, 894], [336, 998], [366, 1083], [522, 1173], [796, 1260], [782, 1290], [740, 1482],
];

const Viewport = () => (
  <div className="min-h-0 flex-1 overflow-hidden border-2 border-[#75662a] bg-gradient-to-b from-[#1b1b1b] to-[#4d4d4d]">
    <svg viewBox="44 81 1354 736" preserveAspectRatio="xMaxYMin slice" className="h-full w-full" aria-label="Perspective viewport">
      <defs>
        <linearGradient id="shoulder" x1="0.600" y1="0" x2="0.400" y2="0.500">
          <stop offset="0" stopColor="#909090" />
          <stop offset="0.400" stopColor="#dedede" />
          <stop offset="1" stopColor="#f2f2f2" />
        </linearGradient>
      </defs>
      <g stroke="#505050">
        {[109, 155, 200, 246, 291, 336, 382, 427, 472, 518, 563, 608, 654, 699, 744].map((y) => (
          <path key={y} d={`M44 ${y + 3}L1398 ${y - 1}`} />
        ))}
        <path d="M1210 425L1398 650M44 120h20" />
      </g>
      <path d="M735 818l30-16 130 0 503-2v18z" fill="#000" />
      <path d="M940 785h160v17h-100z" fill="#000" />
      <path d="M920 785h25l-18 17z" fill="#dff5df" />
      <g transform="translate(1080 110) scale(.3333 .4529)">
        <path d="M42 1310L96 1288 657 1520 752 1345 740 1482 657 1492 310 1524H42z" fill="#000" />
        {FACES.map(([fill, points]) => (
          <polygon key={points} points={points} fill={fill} stroke="#fff" strokeWidth="1" vectorEffect="non-scaling-stroke" />
        ))}
        <path d="M42 900L216 897M297 84L449 253M522 1173L782 1290M472 1189L782 1290M394 1279L782 1290M92 542L42 500M80 793L42 760M102 1345L210 1335M250 1355L310 1522L100 1388M690 1465L740 1482L710 1440" fill="none" stroke="#fff" vectorEffect="non-scaling-stroke" />
        {HEAD_GREEN.map((points) => (
          <polyline key={points} points={points} fill="none" stroke="#1ee01e" strokeWidth="2" vectorEffect="non-scaling-stroke" />
        ))}
        {HEAD_DOTS.map(([x, y]) => (
          <rect key={`${x}-${y}`} x={x - 4} y={y - 3} width="8" height="6" fill="#3b3bc8" />
        ))}
      </g>
      <path d="M1095 704h19v114h-19z" fill="#000" />
      <path d="M922 790l5 12 13-12M935 792l66 9 93-1" stroke="#1ee01e" strokeWidth="2" fill="none" />
      <path d="M1000 800l10-9M1093 791v9" stroke="#ddd" />
      <path d="M44 797h22" stroke="#a02020" strokeWidth="2" />
      <path d="M66 790v7" stroke="#2020a0" strokeWidth="2" />
      <g>
        <ellipse cx="1355" cy="141" rx="29" ry="5" fill="none" stroke="#7a7c80" strokeWidth="3" />
        <rect x="1343" y="114" width="25" height="26" fill="#74777d" />
        <text x="1355" y="130" fontSize="6" fontWeight="bold" textAnchor="middle" fill="#55585e">BACK</text>
      </g>
    </svg>
  </div>
);

/* white mesh edges, upper left part of the sheet */
const MESH_A = "M375 90L793 378 1075 527 M450 303L900 177 760 320 678 447 738 605 M450 303L1210 328 980 430 840 523 738 605 M450 303L793 378 M450 303L678 447 840 523 1095 600 M450 303L738 605 M508 598L678 447 980 430 1350 540 M508 598L738 605 950 660 M635 648L678 447 M635 648L840 523 M800 178L793 378 738 605 738 900 M800 178L980 430 1095 600 1120 730 1140 800 M760 320L980 430 1075 527 1315 573 M1210 383L1350 430 M1210 383L1075 527 840 523 955 660 M1210 383L1315 573 1295 693 M1075 527L1095 600 955 660 720 698 738 605 M1075 527L1200 650 1120 730 M1095 600L1315 573 1200 650 1170 760 M720 698L760 778 955 660 935 828 760 778 700 823 M720 698L700 823 615 790 M615 790L615 848 700 823 720 880 935 828 940 900 M760 778L738 880 M950 660L940 828 M955 660L1120 730 935 828 1095 815 1140 800 M1095 600L1350 540 M1200 650L1295 693 1170 760 1140 800 1262 770 1350 765 M935 828L900 900 M935 828L1100 890 M1095 815L1100 890 1145 858 1140 800 M1295 693L1262 770 1350 700 M738 605L615 790 M793 378L900 177";

/* right half, face and neck */
const MESH_B = "M890 0L1050 68 M810 0L1020 172 564 16 770 156 1020 172 M500 120L770 156 617 188 490 157 M340 0L340 67 500 120 M340 67L490 157 500 120 564 16 515 0 M392 0L500 120 M770 156L680 250 888 274 770 156 M1020 172L888 274 692 383 M888 274L888 500 M888 274L1054 327 1195 360 1080 188 1054 327 1020 172 M1054 327L888 500 692 383 M1054 327L1106 472 1170 462 1054 327 M888 274L712 537 692 383 M712 537L888 500 1106 472 1018 574 888 500 868 755 1018 574 1145 520 1106 472 M1018 574L1114 650 1145 520 1225 663 1114 650 868 755 712 537 783 638 888 500 M783 638L868 755 746 724 783 638 670 665 746 724 720 846 868 755 975 850 1114 650 1275 830 M1114 650L1080 912 975 850 875 965 868 755 M975 850L994 1027 M875 965L720 846 648 883 M783 638L675 612 670 665 M692 383L617 327 M680 250L692 383 645 462 712 537 637 552 645 462 M637 552L622 610 670 665 620 708 746 724 M637 552L675 612 622 610 620 708 665 780 720 846 605 808 665 780 746 724 M560 728L605 808 620 708 560 728 520 800 605 808 648 883 545 868 605 808 M560 728L665 780 M487 724L560 728 M487 724L520 800 545 868 535 1013 325 937 303 1017 5 800 325 937 325 830 545 868 400 773 325 830 280 710 400 773 400 650 M400 773L520 800 M400 773L487 724 400 700 280 710 228 600 340 655 400 700 M325 830L535 1013 M325 937L495 1093 M5 800L325 830 5 710 5 800 50 997 M40 617L325 830 M40 617L280 710 M40 617L5 710 M40 617L228 600 213 520 350 547 228 600 310 597 400 700 M310 597L385 640 350 547 310 597 M213 520L275 425 350 547 355 470 275 425 307 385 M213 520L85 530 40 617 0 580 M213 520L90 467 85 530 0 505 M200 335L213 520 M200 335L275 425 M200 335L307 385 275 425 180 418 90 467 97 400 213 520 M212 300L307 385 305 268 212 300 265 275 352 207 228 135 305 268 M305 268L423 370 352 207 M305 268L415 245 352 207 423 188 490 157 M352 207L318 132 340 67 M228 135L318 132 410 143 490 157 M318 132L423 188 415 245 M410 143L423 188 432 258 M423 188L490 195 490 157 560 183 617 188 613 237 568 255 M490 195L545 205 560 183 590 240 M490 195L440 215 415 245 432 258 M440 215L490 222 540 225 575 245 M545 205L575 245 617 188 680 250 M613 237L575 245 M490 157L490 235 M617 188L617 327 570 272 613 237 692 383 M570 272L590 300 617 327 465 280 M432 275L465 305 423 370 M465 305L515 300 560 295 M465 305L490 390 423 370 M465 305L555 365 617 327 490 390 555 365 515 300 M490 390L645 462 555 365 M490 390L617 560 M490 390L470 455 423 370 M490 390L555 517 M490 390L520 475 492 502 470 455 M423 370L360 375 307 385 380 455 423 370 430 450 470 455 M307 385L355 470 395 430 M307 385L430 450 M305 268L360 375 M355 470L380 455 430 450 450 485 400 487 355 470 385 520 400 487 430 515 450 485 470 455 M385 520L430 515 492 502 555 517 637 552 M385 520L350 547 M385 520L415 583 455 530 492 502 M430 515L455 530 470 572 M455 530L555 517 545 568 637 552 M470 572L545 568 622 610 M415 583L385 640 470 605 470 572 415 583 M470 572L510 605 545 568 560 603 M555 517L600 605 M645 462L555 517 M350 547L415 583 M385 640L400 660 470 650 540 640 622 620 M400 660L487 665 580 650 622 620 M400 650L450 700 487 724 480 685 535 680 590 668 622 620 M487 665L480 685 M470 650L490 665 535 680 560 728 M530 645L590 668 620 708 535 680 487 724 M450 655L480 685 620 708 M400 700L450 655 M0 300L90 390 97 400 M97 400L212 410 M0 430L172 430 M0 385L97 400 M8 318L97 400 70 345 8 318 30 220 65 255 8 318 M30 220L62 105 155 155 30 220 125 230 200 230 M62 105L172 35 155 155 228 135 172 35 218 0 M172 35L0 48 M172 35L340 67 M62 105L0 50 M62 105L0 150 M62 105L90 190 125 230 155 155 205 230 232 220 172 35 M155 155L232 220 125 180 M125 230L65 255 0 260 M65 255L90 290 M125 230L140 277 200 230 M205 230L185 290 M140 277L160 262 212 300 M65 322L8 318 M70 345L120 355 140 340 160 355 185 335 200 335 M120 355L97 400 160 355 200 335 M228 135L265 275 M232 220L305 268 M352 207L355 265 M0 340L90 467 0 455 M0 480L40 617 M0 220L205 230 M0 235L200 228";

const UV_GREEN_A = "M375 90L440 295 M375 90L900 177 1213 330 1230 350 1350 530 M450 303L440 115 800 178 1210 383 1230 340 1350 95 M508 598L635 648 720 698 650 760 600 795 555 770 600 825 720 895 M508 598L600 825 617 900 M570 768L600 800 M625 785L600 800";
const UV_GREEN_B = "M218 0L228 140 232 220 212 300 200 320 172 428 85 530 40 617 0 660 M1000 0L1050 68 1020 172 1080 186 1170 255 1197 360 1170 462 1140 485 1147 520 1216 520 1227 663 1277 830 1080 912 994 1027 875 965 648 883 535 1010 495 1095 303 1017 180 1005 50 997 0 938 M0 1020L55 1057 0 1078 M432 258L440 243 490 235 545 240 568 255 570 272 545 283 510 286 465 280 435 275z M65 322L90 290 140 277 185 290 208 305 185 325 140 340 100 345 70 335z M385 640L460 612 540 602 620 608 560 620 470 635z M385 645L480 632 620 608";
const UV_GREEN_C = "M556 148L500 181 M610 148L718 268 775 346 M258 440L265 455 190 505 217 534 180 600 168 663 234 703 330 696 385 690 450 672 385 625 M285 445L287 478 350 530 393 585 431 630 M431 539L393 585 385 625";
const MESH_C = "M583 150L541 236 500 181 541 302 541 236 648 197 541 302 543 324 M541 302L559 324 M541 302L616 329 648 197 661 296 616 329 M541 302L461 272 541 236 M500 324L541 302 461 335 M500 181L461 272 M583 150L648 197 718 268 661 296 696 324 M661 296L722 324 M661 296L775 346 M583 150L541 302 M648 197L775 346 M217 534L350 530 431 525 560 520 M190 505L287 478 217 534 246 600 181 598 217 534 378 590 M181 598L285 570 350 530 M246 600L285 570 320 643 246 600 255 645 181 598 168 663 255 645 234 703 320 643 384 690 378 590 320 643 325 580 385 605 M325 580L350 530 378 590 M285 570L325 580 M181 598L385 607 M168 663L385 627 M168 663L246 600 M234 703L246 600 M255 645L384 690 M300 441L287 478 340 463 300 441 265 455 287 478 M340 463L366 441 431 472 M287 478L431 464 M340 463L431 489 M375 463L431 513 M366 441L375 463 350 530 340 463 M353 441L340 463 M287 478L350 530 431 513 M375 463L393 585 M340 463L393 585 M350 530L431 489 M265 455L350 530 M190 505L285 520 350 530 M217 534L285 520 287 478 M393 585L447 648 M393 585L378 590";

const Lines = ({ d, transform }) => (
  <g transform={transform}>
    {d.split(" M").map((run, i) => (
      <path key={i} d={i ? `M${run}` : run} vectorEffect="non-scaling-stroke" />
    ))}
  </g>
);

const UvCanvas = () => (
  <svg viewBox="60 151 892 583" preserveAspectRatio="xMinYMin slice" className="h-full min-w-0 flex-1" aria-label="UV layout">
    <defs>
      <pattern id="checks" patternUnits="userSpaceOnUse" x="119.300" y="183" width="157.400" height="78.700">
        <rect width="157.400" height="78.700" fill="#cccccc" />
        <rect width="78.700" height="39.350" fill="#929292" />
        <rect x="78.700" y="39.350" width="78.700" height="39.350" fill="#929292" />
      </pattern>
    </defs>
    <rect x="60" y="151" width="1200" height="800" fill="url(#checks)" />
    <g fill="none" stroke="#fff" strokeOpacity=".9">
      <Lines transform="translate(60 150) scale(.3333)" d={MESH_A} />
      <Lines transform="translate(440 330) scale(.3333)" d={MESH_B} />
      <Lines transform="scale(1.0198)" d={MESH_C} />
    </g>
    <g fill="none" stroke="#45c445" strokeWidth="1.200">
      <Lines transform="translate(60 150) scale(.3333)" d={UV_GREEN_A} />
      <Lines transform="translate(440 330) scale(.3333)" d={UV_GREEN_B} />
      <Lines transform="scale(1.0198)" d={UV_GREEN_C} />
    </g>
    <g fill="none" stroke="#e8714c">
      <path d="M197 251h44v98h-44zM203 300h33M219 283v33" />
      {[197, 219, 241].map((x) => [251, 300, 349].map((y) => (
        <rect key={`${x}-${y}`} x={x - 2.5} y={y - 2.5} width="5" height="5" />
      )))}
    </g>
    <path d="M210 251L229 349" stroke="#d01c1c" strokeWidth="2" />
  </svg>
);

const SideRollouts = () => (
  <aside className="w-[135px] shrink-0 overflow-hidden border-l-2 border-[#222] bg-[#444]">
    <div className="flex h-full w-[152px] flex-col overflow-hidden pt-1 pl-px">
      <Rollout title="Quick Transform" height="h-[82px]">
        <div className="flex items-center gap-[2px] pt-1 pl-[2px]">
          <Tool names="plus" cell="w-6 h-6" icon="h-5 w-5" />
          <div className="grid grid-cols-3 gap-y-2">
            {["alignh", "linear", "rotcw", "alignv", "alignedge", "rotccw"].map((n) => <Tool key={n} names={n} cell="w-6 h-6" />)}
          </div>
          <span className="ml-2.5 h-14 w-[2px] bg-[#666]" />
          <div className="ml-1 flex flex-col gap-2">
            <Tool names="quickrest" cell="w-6 h-6" icon="h-5 w-5" /><Tool names="quickrest2" cell="w-6 h-6" icon="h-5 w-5" />
          </div>
        </div>
      </Rollout>
      <Rollout title="Reshape Elements" height="h-[52px]">
        <div className="flex pt-1.5 pl-[34px]">
          <Tool names="straighten" cell="w-6 h-6" icon="h-5 w-5" /><Tool names="relaxbolt" cell="w-[23px] h-6" icon="h-5 w-5" /><Tool names="relax" cell="w-6 h-6" icon="h-5 w-5" />
        </div>
      </Rollout>
      <Rollout title="Stitch" height="h-[53px]">
        <div className="flex pt-1.5 pl-4">
          {["stitchA", "stitchB", "stitchC", "stitchD"].map((n) => <Tool key={n} names={n} cell="w-6 h-6" icon="h-5 w-5" />)}
        </div>
      </Rollout>
      <Rollout title="Explode" height="h-[101px]">
        <div className="flex pt-2 pl-1.5">
          {["basket", "flatten tri", "flatten minigrid", "flatten miniball", "flatten"].map((n) => <Tool key={n} names={n} cell="w-[23px] h-6" icon="h-5 w-5" />)}
        </div>
        <Group title="Weld" className="mr-[-8px] ml-1.5 h-[52px]">
          <div className="flex gap-1">
            <div className="flex pl-[2px]"><Tool names="target" cell="w-[23px] h-10" icon="h-5 w-5" /><Tool names="weld" cell="w-6 h-10" icon="h-5 w-5" /></div>
            <label className="ml-4 flex flex-col gap-[2px] pt-[2px] text-[9px] leading-[12px] text-[#ccc]">Threshold:<Num label="Threshold" value="0,01" width="w-[26px]" /></label>
          </div>
        </Group>
      </Rollout>
      <Rollout title="Peel" height="h-[132px]">
        <Group className="mt-[7px] mr-[-8px] ml-2.5 h-[60px]">
          <label className="flex items-center gap-3 pt-1.5 pl-6 text-[9px] text-[#ccc]"><input type="checkbox" defaultChecked className="h-2.5 w-2.5 accent-[#222]" />Detach</label>
          <div className="flex pt-1.5 pl-4">
            <Tool names="ball" cell="w-6 h-6" icon="h-5 w-5" /><Tool names="ball" cell="w-6 h-6" icon="h-5 w-5" /><Tool names="reset" cell="w-[22px] h-6" icon="h-5 w-5" />
          </div>
        </Group>
        <Group title="Pins:" className="mr-[-8px] ml-2.5 h-[50px]">
          <div className="flex items-center pt-1.5 pl-1">
            <Tool names="pin" cell="w-[22px] h-6" icon="h-4 w-4" /><Tool names="pin cross" cell="w-[24px] h-6" icon="h-4 w-4" /><Tool names="pinbolt" active cell="w-[22px] h-[22px]" icon="h-5 w-5" />
            <Bar /><Tool names="pin cursor" cell="w-[24px] h-6" icon="h-5 w-5" />
          </div>
        </Group>
      </Rollout>
      <Rollout title="Arrange Elements" height="h-[111px]">
        <div className="flex pt-1">
          <div className="flex flex-col gap-2.5 pt-4 pr-2.5 pl-1">
            <Tool names="packA" cell="w-6 h-6" /><Tool names="packD" cell="w-6 h-6" />
          </div>
          <Group className="h-[88px] w-28">
            <div className="flex gap-3">
              <div className="flex flex-col gap-2 pt-3.5 pl-0.5"><Tool names="packB" cell="w-[22px] h-6" /><Tool names="packC" cell="w-[22px] h-6" /></div>
              <div className="flex flex-col pt-1 pl-0.5 text-[9px] leading-[21px] text-[#ccc]">
                <label className="flex items-center gap-2"><input type="checkbox" defaultChecked className="h-2.5 w-2.5 accent-[#222]" />Rescale</label>
                <label className="flex items-center gap-2"><input type="checkbox" className="h-2.5 w-2.5 appearance-none border border-[#1c1c1c] bg-[#444]" />Rotate</label>
                <label className="leading-[18px]">Padding:<Num label="Padding" value="0,02" width="w-[31px]" /></label>
              </div>
            </div>
          </Group>
        </div>
      </Rollout>
      <Rollout title="Element Properties" height="h-[30px]" />
    </div>
  </aside>
);

const UvWindow = () => (
  <section aria-label="Edit UVWs" className="absolute top-[73px] left-[52px] z-30 flex h-[719px] w-[1042px] flex-col border border-[#c79f4e] bg-[#edc56a] pr-1.5 pb-[7px] pl-[7px]">
    <div className="flex h-[31px] shrink-0 items-start">
      <Icon names="max" className="mt-1.5 h-[17px] w-[17px]" />
      <h2 className="flex-1 pt-1 pl-[90px] text-center text-[15px] leading-[20px] text-[#333]">Edit UVWs</h2>
      <button aria-label="Minimize" className="flex h-[22px] w-[31px] items-center justify-center"><span className="mt-2 h-[2px] w-3 bg-[#3a2e10]" /></button>
      <button aria-label="Maximize" className="flex h-[22px] w-[28px] items-center justify-center"><span className="h-[11px] w-3 border border-t-2 border-[#3a2e10]" /></button>
      <button aria-label="Close" className="flex h-[22px] w-12 items-center justify-center bg-[#c9504e] text-[12px] leading-none font-bold text-white">✕</button>
    </div>
    <nav className="flex h-[22px] shrink-0 items-center gap-3 bg-[#f5f6f7] pl-1 text-[12px] leading-none text-[#222]">
      {UV_MENUS.map((m) => <button key={m}>{m}</button>)}
    </nav>
    <div className="flex h-6 shrink-0 items-center bg-[#444]">
      <Tool names="moveBig" cell="w-[23px] h-6" icon="h-5 w-5" />
      <Tool names="rotate" cell="w-6 h-6" icon="h-5 w-5" />
      <Tool names="scaleuv" cell="w-[23px] h-6" icon="h-5 w-5" />
      <Tool names="freeform" active cell="w-[22px] h-[22px]" icon="h-5 w-5" />
      <Bar />
      <Tool names="uvmirror" cell="w-6 h-6" icon="h-5 w-5" />
      <span className="flex-1" />
      <Tool names="checker" active cell="w-[22px] h-[22px]" />
      <button className="ml-1 text-[14px] leading-none text-[#aaa]">UV</button>
      <Tool names="options" cell="w-[22px] h-6" icon="h-3.5 w-3.5" />
      <Pick label="Checker pattern" value={"CheckerPattern\u00a0 ( Checker )"} className="mr-3.5 ml-[1px] h-[18px] w-[141px]" />
    </div>
    <div className="flex min-h-0 flex-1 bg-[#444]">
      <UvCanvas />
      <SideRollouts />
    </div>
    <div className="flex h-[25px] shrink-0 items-center border-b border-[#666] bg-[#444]">
      <Tool names="dots" cell="w-6 h-6" icon="h-[18px] w-[18px]" /><Tool names="edge" active cell="w-[22px] h-[22px]" /><Tool names="poly" cell="w-6 h-6" icon="h-[19px] w-[19px]" />
      <Bar /><Tool names="cube" cell="w-[22px] h-6" /><Bar />
      {["grow", "shrink", "loop", "loopplus", "loopminus", "ring", "ringplus", "ringminus"].map((n) => <Tool key={n} names={n} cell="w-[23px] h-6" icon="h-5 w-5" />)}
      {["brush", "graybrush", "graybrush2"].map((n) => <Tool key={n} names={n} cell="w-6 h-6" icon="h-[18px] w-[18px]" />)}
      <span className="flex-1" />
      <span className="h-full w-px bg-[#2a2a2a]" />
      <Tool names="sun" cell="w-[25px] h-6" />
      <Num label="Falloff" value="0,0" width="w-[31px]" />
      <Tool names="diag" cell="w-7 h-6 ml-1" icon="h-5 w-5" />
      <button className="text-[14px] leading-none text-[#ddd]">XY</button>
      <Bar />
      <Tool names="falloff" active cell="w-[22px] h-[23px] ml-1" />
      <span className="ml-1 flex pr-1.5"><Num label="Falloff distance" value="16" width="w-[18px]" /></span>
    </div>
    <div className="flex h-[25px] shrink-0 items-center bg-[#444] pl-[2px] text-[9px] leading-none text-[#ccc]">
      <Tool names="absolute" cell="w-5 h-6" icon="h-[17px] w-[17px]" />
      <Bar />
      <label className="ml-0.5 flex items-center gap-1">U:<Num label="U" width="w-6" /></label>
      <label className="ml-1.5 flex items-center gap-2">V:<Num label="V" width="w-6" /></label>
      <label className="ml-1.5 flex items-center gap-1">W:<Num label="W" value="0,0" width="w-6" /></label>
      <Bar />
      <span className="flex-1" />
      <Tool names="lock" cell="w-[25px] h-6" icon="h-4 w-4" /><Tool names="arrowred" cell="w-[27px] h-6" icon="h-4 w-4" /><Tool names="bulb" cell="w-[30px] h-6" icon="h-4 w-4" /><Tool names="snow" cell="w-6 h-6" icon="h-4 w-4" />
      <Bar />
      <Pick label="Material ID" value="All IDs" className="h-[18px] w-[116px]" />
      <span className="flex pr-0.5">
        {["hand", "zoom", "zoomreg", "box", "gridsnap"].map((n) => <Tool key={n} names={n} cell="w-[23px] h-6" icon="h-5 w-5" />)}
      </span>
    </div>
  </section>
);

const STACK = [
  { name: "Unwrap UVW", bulb: true, on: true },
  { name: "Skin", bulb: true },
  { name: "Editable Mesh" },
];

const CommandPanel = () => (
  <aside className="flex w-[199px] shrink-0 flex-col overflow-hidden bg-[#444] pt-0.5">
    <div className="flex shrink-0 border-b border-[#2a2a2a] pl-1">
      {["create", "modify", "hier", "motion", "display", "hammer"].map((n) => (
        <button key={n} aria-label={n} className={`flex h-5 w-6 items-center justify-center rounded-t border border-b-0 border-[#2a2a2a] ${n === "modify" ? "bg-[#555]" : ""}`}>
          <Icon names={n} className="h-4 w-4" />
        </button>
      ))}
    </div>
    <div className="mt-1 flex shrink-0 gap-1 pr-1 pl-3">
      <input aria-label="Object name" defaultValue="body__LOD1" className="h-5 min-w-0 flex-1 border-2 border-r border-b border-[#222] border-b-[#555] bg-[#4d4d4d] px-px text-[9px] text-[#ddd]" />
      <button aria-label="Object color" className="h-5 w-[17px] border border-[#999] bg-[#e4e4e4]" />
    </div>
    <Pick label="Modifier List" value="Modifier List" tone="bg-[#4b4b4b] text-[#ddd]" className="mt-[7px] mr-1 ml-3 h-[22px]" />
    <ul className="mt-[5px] mr-2 ml-3 h-[105px] shrink-0 border-2 border-[#ccc] bg-[#555] text-[9px] text-[#e0e0e0]">
      {STACK.map((s) => (
        <li key={s.name} className={`flex h-[13px] items-center gap-1.5 border-b border-[#6a6a6a] pl-1 leading-none ${s.on ? "bg-[#3b80dc]" : ""}`}>
          {s.bulb && <svg viewBox="0 0 10 14" className="h-3 w-2.5" aria-hidden="true"><circle cx="5" cy="5" r="4" fill="#fff" stroke="#111" /><path d="M4 9h3v4H4z" fill="#fff" /></svg>}
          <span className="flex h-2 w-2 items-center justify-center bg-black text-[7px] text-[#ccc]">+</span>
          <span className="flex-1">{s.name}</span>
          <svg viewBox="0 0 12 12" className="mr-1 h-3 w-3" aria-hidden="true"><path d="M0 6h2v2H0zM5 9h2v2H5zM9 1h2v2H9z" fill="#111" /></svg>
        </li>
      ))}
    </ul>
    <div className="mt-1 flex h-5 shrink-0 items-center pl-3">
      <Tool names="pinstack" cell="w-[22px] h-5" icon="h-4 w-4" /><Sep className="h-3" /><Tool names="showend" cell="w-[26px] h-5" icon="h-4 w-4" /><Sep className="h-3" />
      <Tool names="unique" cell="w-[25px] h-5" icon="h-3.5 w-3.5" /><Tool names="trash" cell="w-4 h-5" icon="h-3.5 w-3.5" /><Sep className="ml-1.5 h-3" /><Tool names="config" cell="w-[26px] h-5" icon="h-4 w-4" />
    </div>
    <div className="mt-3 mr-1 ml-1 h-[2px] shrink-0 bg-[#1c1c1c]" />
    <div className="mt-1.5 flex min-h-0 flex-1 border-t border-[#2a2a2a] pl-1.5">
      <div className="flex min-w-0 flex-1 flex-col overflow-hidden pt-1">
        <Rollout title="Selection" height="h-[200px]">
          <div className="flex pt-2 pl-3.5">
            <Tool names="dots" cell="w-[22px] h-6" icon="h-4 w-4" /><Tool names="edge" active cell="w-[23px] h-[23px]" /><Tool names="poly" cell="w-6 h-6" icon="h-5 w-5" /><span className="w-6" /><Tool names="cube" cell="w-6 h-6" />
          </div>
          <Group title="Modify Selection:" className="mx-1.5 mt-1.5 h-[56px]">
            <div className="flex pt-2.5 pl-0.5"><Tool names="grow" cell="w-6 h-6" icon="h-5 w-5" /><Tool names="shrink" cell="w-[23px] h-6" icon="h-5 w-5" /><span className="w-6" /><Tool names="loop" cell="w-6 h-6" icon="h-5 w-5" /><Tool names="ring" cell="w-6 h-6" icon="h-5 w-5" /></div>
          </Group>
          <Group title="Select By:" className="mx-1.5 mt-[2px] h-[86px]">
            <div className="flex pt-2">
              <Tool names="seledge" cell="w-6 h-6" /><Tool names="p2p" cell="w-6 h-6" icon="h-[18px] w-[18px]" /><span className="w-2" /><Tool names="planar" cell="w-6 h-6" icon="h-[18px] w-[18px]" />
              <Num label="Planar angle" value="0,0" width="w-[25px]" height="h-[15px]" />
            </div>
            <div className="flex items-start pt-2.5">
              <Tool names="smooth" cell="w-6 h-6" icon="h-[19px] w-[19px]" /><Num label="Smoothing group" value="0" width="w-[22px]" height="h-[15px]" />
              <span className="w-1" /><Tool names="matid" cell="w-6 h-6" icon="h-[19px] w-[19px]" /><Num label="Material ID" value="0" width="w-[22px]" height="h-[15px]" />
            </div>
          </Group>
        </Rollout>
        <Rollout title="Edit UVs" height="h-[137px]">
          <div className="flex flex-col gap-[5px] px-2.5 pt-1"><Push className="h-[27px]">Open UV Editor ...</Push><Push className="h-[27px]">Tweak In View</Push></div>
          <div className="flex pt-3 pl-9"><Tool names="quick" cell="w-6 h-6" icon="h-5 w-5" /><Tool names="quickb" cell="w-6 h-6" icon="h-5 w-5" /><Tool names="quickc" cell="w-6 h-6" icon="h-5 w-5" /></div>
        </Rollout>
        <Rollout title="Channel" height="h-[149px]">
          <div className="grid grid-cols-2 gap-x-1 px-1.5 pr-2.5">
            <Push className="h-6">Reset UVWs</Push><Push className="h-6">Save...</Push><span /><Push className="h-6">Load...</Push>
          </div>
          <Group title="Channel:" className="mt-[2px] mr-2.5 ml-1.5 h-[67px]">
            <div className="flex items-center justify-between pt-2 pr-2 pl-1">
              <label className="flex items-center gap-1.5 text-[9px] text-[#ccc]"><input type="radio" name="channel" defaultChecked className="h-2 w-2 appearance-none rounded-full border border-[#111] bg-[#555] checked:bg-[#ddd]" />Map Channel:</label>
              <Num label="Map channel number" value="1" width="w-[36px]" height="h-4" />
            </div>
            <label className="flex items-center gap-1.5 pt-2 pl-1 text-[9px] text-[#ccc]"><input type="radio" name="channel" className="h-2 w-2 appearance-none rounded-full border border-[#111] bg-[#444] checked:bg-[#ddd]" />Vertex Color Channel</label>
          </Group>
        </Rollout>
        <Rollout title="Peel" height="h-[60px]">
          <div className="flex pt-2 pl-6"><Tool names="ball" cell="w-6 h-6" icon="h-5 w-5" /><Tool names="ball" cell="w-6 h-6" icon="h-5 w-5" /><Tool names="reset" cell="w-6 h-6" icon="h-5 w-5" /><Tool names="wrench" cell="w-6 h-4" icon="h-4 w-4" /></div>
        </Rollout>
      </div>
      <div className="mr-1.5 mb-1.5 ml-[2px] flex w-[3px] flex-col"><span className="flex-1 bg-black" /><span className="flex-1 bg-[#c4c4c4]" /></div>
    </div>
  </aside>
);

const TimeArea = () => (
  <div className="shrink-0 bg-[#444]">
    <div className="flex h-[15px] items-center text-[9px] leading-none text-[#ccc]">
      <button className="h-[15px] w-[13px] border border-[#222]">&lt;</button>
      <button className="h-[15px] w-[104px] border-2 border-[#111]">0 / 100</button>
      <button className="h-[15px] w-[13px] border border-[#222]">&gt;</button>
    </div>
    <div className="flex h-[23px] border-t border-[#1c1c1c]">
      <div className="flex w-10 items-center justify-center"><Icon names="trackmini" className="h-4 w-4" /></div>
      <div className="flex flex-1 bg-[#282828]">
        {Array.from({ length: 101 }, (_, i) => (
          <div key={i} className="flex min-w-0 flex-1 flex-col items-center">
            <span className={i === 0 ? "h-5 w-[5px] bg-[#8b8420]" : i % 5 === 0 ? "h-[19px] w-px bg-[#666]" : "h-2.5 w-px bg-[#666]"} />
            {i % 5 === 0 && <span className="-mt-2 text-[10px] leading-[10px] whitespace-nowrap text-[#bbb]">{i}</span>}
          </div>
        ))}
      </div>
      <div className="w-10" />
    </div>
  </div>
);

const StatusBar = () => (
  <footer className="flex h-10 shrink-0 bg-[#444] text-[9px] leading-none text-[#ccc]">
    <div className="flex w-[83px] shrink-0 flex-col p-[2px]">
      <div className="h-[18px] border-2 border-[#999] border-r-white border-b-white bg-[#dcc3c4]" />
      <input aria-label="Script listener" defaultValue="Welcome to" className="h-[19px] border-2 border-r-0 border-[#ddd] bg-white pl-0.5 font-['Liberation_Mono'] text-[12px] text-black" />
    </div>
    <div className="ml-1 flex min-w-0 flex-1 flex-col gap-[3px] border-l-2 border-[#222] pt-[2px]">
      <div className="flex h-[18px] items-center gap-1.5">
        <div className="flex h-full flex-1 items-center border-y border-[#222] pl-1">1 Object Selected</div>
        <Tool names="pinred" cell="w-4 h-4" icon="h-3.5 w-3.5" /><Tool names="lock" cell="w-4 h-4" icon="h-3.5 w-3.5" /><Tool names="absolute" cell="w-4 h-4" icon="h-3 w-3" />
        {["X", "Y", "Z"].map((a) => (
          <label key={a} className="mr-1.5 flex items-center gap-[2px]">{a}:<input className="h-[17px] w-[47px] border-2 border-r border-b border-[#222] bg-[#555]" /></label>
        ))}
        <div className="flex h-full w-[84px] items-center border border-[#2a2a2a] pl-1">Grid = 0,254m</div>
      </div>
      <div className="flex h-[17px] items-center gap-[2px]">
        <div className="flex h-full flex-1 items-center border-t border-[#222] pl-1">Select texture vertices</div>
        <Tool names="isolate" active cell="w-[18px] h-4" icon="h-3.5 w-3.5" />
        <div className="flex h-full w-[84px] items-center border border-[#2a2a2a] pl-1">Add Time Tag</div>
      </div>
    </div>
    <div className="flex shrink-0 gap-1 pt-[2px] pl-[3px]">
      <Push className="h-9 w-[35px]"><Icon names="key" /></Push>
      <div className="flex w-10 flex-col gap-px"><Push className="h-[18px]">Auto</Push><Push className="h-[17px]">Set K.</Push></div>
      <div className="flex w-[96px] flex-col gap-px">
        <Pick label="Key filter set" value="Selected" className="h-[18px]" />
        <div className="flex"><Tool names="wave" cell="w-[22px] h-[17px]" icon="h-3.5 w-3.5" /><Push className="h-[17px] flex-1">Filters...</Push></div>
      </div>
    </div>
    <div className="flex w-[188px] shrink-0 flex-col pt-px pl-1">
      <div className="flex h-[19px] items-center">
        {["first", "prev", "play", "next", "last", "zoom", "four", "extents", "extall"].map((n) => <Tool key={n} names={n} cell="w-5 h-5" icon="h-4 w-4" />)}
      </div>
      <div className="flex h-[18px] items-center">
        <Tool names="keymode" cell="w-5 h-4" icon="h-4 w-4" />
        <Num label="Frame" value="0" width="w-[54px]" height="h-[17px]" />
        {["timecfg", "dashed", "hand", "orbit", "maxvp"].map((n) => <Tool key={n} names={n} cell="w-[19px] h-4" icon="h-3.5 w-3.5" />)}
      </div>
    </div>
  </footer>
);

export default function App() {
  return (
    <div className="relative flex h-screen flex-col overflow-hidden bg-[#444] font-['Open_Sans',sans-serif]">
      <TitleBar />
      <nav className="flex h-[22px] shrink-0 items-center gap-[21px] border-t border-[#555] bg-gradient-to-b from-[#a8a8a8] to-[#4a4a4a] pl-[46px] text-[12px] leading-none text-[#eee]">
        {MENUS.map((m) => <button key={m} className="whitespace-nowrap">{m}</button>)}
      </nav>
      <MainToolbar />
      <main className="flex min-h-0 flex-1">
        <div className="flex w-[42px] shrink-0 flex-col bg-[#303030]">
          <div className="mx-[2px] mt-1 h-[2px] bg-[#1c1c1c]" />
          <div className="flex-1" />
          <button aria-label="Play" className="mb-3 flex h-5 w-5 items-center justify-center self-center rounded-[2px] border border-[#222] bg-[#4a4a4a] text-[8px] text-[#ddd]">▶</button>
          <div className="mb-0.5 ml-1 h-[46px] rounded-l bg-gradient-to-b from-[#5d81b0] to-[#3f84dc] pt-2 pl-[3px]">
            <div className="h-7 w-8 border-2 border-[#2c4d78] bg-[#5a6778]" />
          </div>
        </div>
        <div className="flex min-w-0 flex-1 flex-col">
          <Viewport />
          <TimeArea />
        </div>
        <CommandPanel />
      </main>
      <StatusBar />
      <div className="h-[2px] shrink-0 bg-[#cdb27a]" />
      <UvWindow />
    </div>
  );
}
